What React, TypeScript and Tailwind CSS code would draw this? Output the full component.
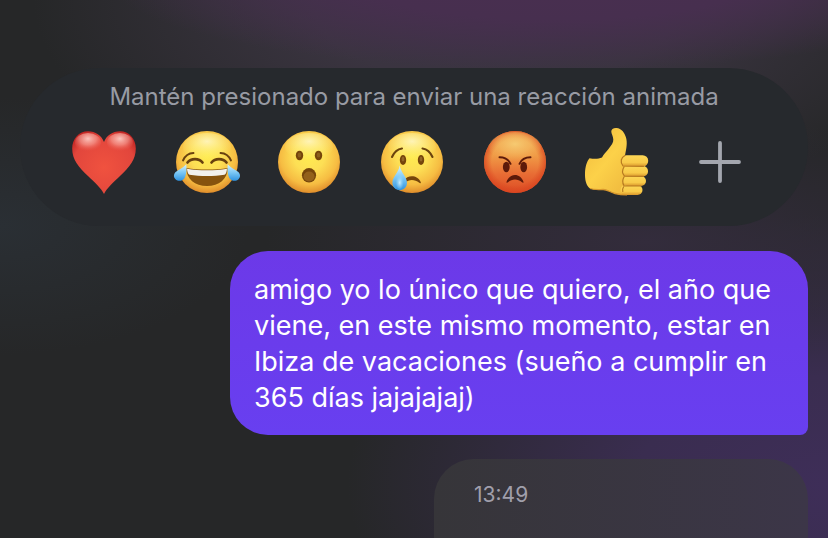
import React from "react";

interface Reaction {
  name: string;
  icon: React.ReactNode;
}

// Shared gradients, referenced by id from the reaction icons
function Gradients() {
  return (
    <svg className="absolute" width="0" height="0" aria-hidden="true">
      <defs>
        <radialGradient id="face" cx="0.5" cy="0.4" r="0.62">
          <stop offset="0" stopColor="#ffec50" />
          <stop offset="0.4" stopColor="#fddf55" />
          <stop offset="0.75" stopColor="#f6bc42" />
          <stop offset="1" stopColor="#dc8628" />
        </radialGradient>
        <radialGradient id="shine" cx="0.5" cy="0.3" r="0.65">
          <stop offset="0" stopColor="#fff8cf" stopOpacity="0.8" />
          <stop offset="1" stopColor="#fff27a" stopOpacity="0" />
        </radialGradient>
        <linearGradient id="angry" x1="0" y1="0" x2="0" y2="1">
          <stop offset="0" stopColor="#efa04a" />
          <stop offset="0.4" stopColor="#f09a46" />
          <stop offset="0.7" stopColor="#e86c34" />
          <stop offset="1" stopColor="#dc4c24" />
        </linearGradient>
        <radialGradient id="angry-rim" cx="0.5" cy="0.5" r="0.5">
          <stop offset="0.75" stopColor="#d9431f" stopOpacity="0" />
          <stop offset="1" stopColor="#d9431f" stopOpacity="0.75" />
        </radialGradient>
        <radialGradient id="angry-shine" cx="0.5" cy="0.4" r="0.6">
          <stop offset="0" stopColor="#f7cf76" stopOpacity="0.9" />
          <stop offset="0.5" stopColor="#f5c066" stopOpacity="0.6" />
          <stop offset="1" stopColor="#f2a950" stopOpacity="0" />
        </radialGradient>
        <radialGradient id="heart" cx="0.5" cy="0.58" r="0.66">
          <stop offset="0" stopColor="#f0523f" />
          <stop offset="0.75" stopColor="#e2463c" />
          <stop offset="1" stopColor="#bd2220" />
        </radialGradient>
        <radialGradient id="heart-shine" cx="0.5" cy="0.3" r="0.65">
          <stop offset="0" stopColor="#ffd2ca" stopOpacity="0.9" />
          <stop offset="0.5" stopColor="#f9a79d" stopOpacity="0.6" />
          <stop offset="1" stopColor="#f0645a" stopOpacity="0" />
        </radialGradient>
        <linearGradient id="tear" x1="0" y1="0" x2="0" y2="1">
          <stop offset="0" stopColor="#d5f3ff" />
          <stop offset="0.5" stopColor="#7cc8f5" />
          <stop offset="1" stopColor="#2f93e0" />
        </linearGradient>
        <radialGradient id="tear-glow" cx="0.5" cy="0.6" r="0.5">
          <stop offset="0" stopColor="#d2f2ff" stopOpacity="0.9" />
          <stop offset="1" stopColor="#8fd6fb" stopOpacity="0" />
        </radialGradient>
        <linearGradient id="hand" x1="0" y1="0" x2="1" y2="1">
          <stop offset="0" stopColor="#f0b93a" />
          <stop offset="0.45" stopColor="#fcd149" />
          <stop offset="1" stopColor="#eab03a" />
        </linearGradient>
        <linearGradient id="finger" x1="0" y1="0" x2="0" y2="1">
          <stop offset="0" stopColor="#fdd756" />
          <stop offset="0.65" stopColor="#f8ca49" />
          <stop offset="1" stopColor="#d9962b" />
        </linearGradient>
      </defs>
    </svg>
  );
}

function Icon({ children }: { children: React.ReactNode }) {
  return (
    <svg
      className="size-17 overflow-visible"
      viewBox="0 0 68 68"
      fill="none"
      aria-hidden="true"
    >
      {children}
    </svg>
  );
}

function Face() {
  return (
    <>
      <circle cx="34" cy="34" r="31" fill="url(#face)" />
      <ellipse cx="34" cy="19" rx="24" ry="14" fill="url(#shine)" />
    </>
  );
}

const reactions: Reaction[] = [
  {
    name: "Me encanta",
    icon: (
      <Icon>
        <path
          d="M34 66C31 60 25 54.500 18 48C8.500 39 2.200 31.500 2.200 20.500C2.200 10.500 9 3.200 18 3.200C25.500 3.200 31.500 7.500 34 14C36.500 7.500 42.500 3.200 50 3.200C59 3.200 65.800 10.500 65.800 20.500C65.800 31.500 59.500 39 50 48C43 54.500 37 60 34 66Z"
          fill="url(#heart)"
        />
        <ellipse cx="18" cy="14.500" rx="13" ry="9.500" fill="url(#heart-shine)" />
        <ellipse cx="50" cy="14.500" rx="13" ry="9.500" fill="url(#heart-shine)" />
      </Icon>
    ),
  },
  {
    name: "Me divierte",
    icon: (
      <Icon>
        <Face />
        <g stroke="#69410f" strokeLinecap="round">
          <path d="M10 32.500C12 28 15.500 25.200 20.500 25" strokeWidth="1.900" />
          <path d="M58 32.500C56 28 52.500 25.200 47.500 25" strokeWidth="1.900" />
          <path d="M14.500 34.500C18 30 26 30 29.500 34.500" strokeWidth="2.700" />
          <path d="M38.500 34.500C42 30 50 30 53.500 34.500" strokeWidth="2.700" />
        </g>
        <path
          d="M13.300 40C25 42 43 42 54.700 40C54.700 51 46 58 34 58C22 58 13.300 51 13.300 40Z"
          fill="#86530e"
        />
        <path
          d="M14 40.700C26 42.700 42 42.700 54 40.700C53.700 44 53 46 51.500 46.800C41 48.500 27 48.500 16.500 46.800C15 46 14.300 44 14 40.700Z"
          fill="#f2f0ec"
        />
        <path
          d="M13.300 36.200C13.800 42 13.300 47.500 11.300 50.500C9 53.500 5 53.500 2.500 51.300C0.300 49 0.500 45.800 3 43.800C5.500 41.800 10 40 13.300 36.200Z"
          fill="url(#tear)"
        />
        <path
          d="M54.700 36.200C54.200 42 54.700 47.500 56.700 50.500C59 53.500 63 53.500 65.500 51.300C67.700 49 67.500 45.800 65 43.800C62.500 41.800 58 40 54.700 36.200Z"
          fill="url(#tear)"
        />
      </Icon>
    ),
  },
  {
    name: "Me asombra",
    icon: (
      <Icon>
        <Face />
        <g fill="#75450b">
          <ellipse cx="24.500" cy="27.500" rx="3.700" ry="4.800" />
          <ellipse cx="43.500" cy="27.500" rx="3.700" ry="4.800" />
          <ellipse cx="34" cy="47.300" rx="7.100" ry="7.300" />
        </g>
        <g fill="#8a5e1c">
          <ellipse cx="24.500" cy="27" rx="1.800" ry="2.500" />
          <ellipse cx="43.500" cy="27" rx="1.800" ry="2.500" />
          <ellipse cx="34" cy="48.500" rx="5.500" ry="5" fill="#93601b" />
        </g>
      </Icon>
    ),
  },
  {
    name: "Me entristece",
    icon: (
      <Icon>
        <Face />
        <g stroke="#6b430e" strokeLinecap="round" strokeWidth="2.100">
          <path d="M14 29C16 24.500 19.500 21.200 24 20.500" />
          <path d="M54.500 29C52.500 24.500 49 21.200 44.500 20.500" />
        </g>
        <g fill="#75450b">
          <ellipse cx="25" cy="32" rx="3.200" ry="5" />
          <ellipse cx="43" cy="32" rx="3.200" ry="5" />
          <path d="M26 52.500C29.500 46.500 39.500 46.500 42.800 54.200C43 55.300 42 55.500 41.300 54.800C36.500 51 31.500 51 27 54.500Z" />
        </g>
        <g fill="#936729">
          <ellipse cx="25" cy="31" rx="1.400" ry="2.500" />
          <ellipse cx="43" cy="31" rx="1.400" ry="2.500" />
        </g>
        <path
          d="M21.700 37.500C22.700 44.500 29 48.500 29 54.800C29 59 25.700 62.200 21.700 62.200C17.700 62.200 14.400 59 14.400 54.800C14.400 48.500 20.700 44.500 21.700 37.500Z"
          fill="url(#tear)"
        />
        <ellipse cx="21.700" cy="53" rx="4.200" ry="8" fill="url(#tear-glow)" />
      </Icon>
    ),
  },
  {
    name: "Me enoja",
    icon: (
      <Icon>
        <circle cx="34" cy="34" r="31" fill="url(#angry)" />
        <circle cx="34" cy="34" r="31" fill="url(#angry-rim)" />
        <ellipse cx="34" cy="19" rx="26" ry="15" fill="url(#angry-shine)" />
        <g fill="#5c1a0a">
          <ellipse cx="25.300" cy="39" rx="3.400" ry="5.200" />
          <ellipse cx="42.700" cy="39" rx="3.400" ry="5.200" />
          <path d="M25.500 54C28.500 44.800 39.500 44.800 42.500 54C42.600 55 41.700 55 41 54.300C36.800 50.500 31.200 50.500 27 54.300C26.300 55 25.400 55 25.500 54Z" />
        </g>
        <g stroke="#5c1a0a" strokeLinecap="round" strokeWidth="2">
          <path d="M18.500 29.300C23.500 29.300 27.500 31.500 29.500 35.800" />
          <path d="M49.500 29.300C44.500 29.300 40.500 31.500 38.500 35.800" />
        </g>
      </Icon>
    ),
  },
  {
    name: "Me gusta",
    icon: (
      <Icon>
        <path
          d="M6.500 30.200C11 31 15.500 31 19 29.500C20.500 26 23 24.500 25.500 21C28.500 17 30.500 14.500 30.300 11.500C30.200 8.500 28.500 6 28.300 3.800C28.100 1 30.500 -0.200 33.500 0C38.500 0.500 41.500 4.500 43 9.500C44.500 15 43.500 20 42 27.500L57 40L54 66.500C46 67 39 67.300 32 65.500C27.500 64.300 24 61.500 20.300 61.500C15 61.500 11 62 7 60.500C3 58 1.800 51 2 45C2.200 38.500 4 33 6.500 30.200Z"
          fill="url(#hand)"
        />
        <g fill="url(#finger)">
          <rect x="37.500" y="57" width="22" height="10" rx="5" />
          <rect x="39" y="48" width="24" height="10" rx="5" />
          <rect x="39" y="38" width="26" height="10.500" rx="5" />
          <rect x="38" y="27.200" width="27.200" height="11.300" rx="5.500" />
        </g>
        <g stroke="#b77a20" strokeLinecap="round" strokeWidth="1.200">
          <path d="M42 27.500C38 29.500 36.800 34 40 38L60.500 38.300" />
          <path d="M41 39C39 42 39.200 45.500 41.500 48.200L60.500 48.300" />
          <path d="M41 49C39.500 51.500 39.300 55 41 57.800L58 58" />
          <path d="M40.500 59C39.500 60.500 39.300 62 39.800 63.500" />
        </g>
        <path
          d="M7 60.500C11 62 15 61.500 20.300 61.500C24 61.500 27.500 64.300 32 65.500C36 66.500 40 66.800 44 66.800"
          stroke="#d8982d"
          strokeWidth="1.300"
        />
      </Icon>
    ),
  },
  {
    name: "Más reacciones",
    icon: (
      <Icon>
        <path
          d="M34 15V53M15 34H53"
          stroke="#a3a6ae"
          strokeWidth="3.800"
          strokeLinecap="round"
        />
      </Icon>
    ),
  },
];

function ReactionPicker() {
  return (
    <section className="rounded-[79px] bg-[#26292d] pt-[13px] pb-[30px]">
      <p className="text-center text-2xl leading-8 text-[#989ba4]">
        Mantén presionado para enviar una reacción animada
      </p>
      <div className="mt-[15px] grid grid-cols-7 pl-[33px] pr-[37px]">
        {reactions.map((reaction) => (
          <button
            key={reaction.name}
            type="button"
            aria-label={reaction.name}
            className="flex justify-center"
          >
            {reaction.icon}
          </button>
        ))}
      </div>
    </section>
  );
}

function App() {
  return (
    <main className="flex min-h-screen flex-col bg-[#262728] bg-[radial-gradient(ellipse_54%_17%_at_67%_-4%,#492f50_0%,#472f4f_45%,#472f4f00_100%),radial-gradient(ellipse_56%_40%_at_60%_0%,#3d3446_0%,#3a3440_40%,#3a344000_100%),radial-gradient(ellipse_30%_24%_at_0%_42%,#2a2f34_0%,#2a2f3400_100%),radial-gradient(ellipse_46%_24%_at_78%_45%,#332c3c_0%,#332c3c00_100%),radial-gradient(ellipse_58%_50%_at_100%_90%,#3e2e58_0%,#3a2d50_40%,#3a2d5000_100%)] px-5 pt-[68px] font-['Inter',sans-serif]">
      <Gradients />
      <ReactionPicker />
      <p className="mt-[25px] w-full max-w-[578px] self-end rounded-[38px] rounded-br-lg bg-linear-to-b from-[#6c39e8] to-[#683ff0] px-6 pt-[21px] pb-[19px] text-[27px] leading-9 text-white">
        amigo yo lo único que quiero, el año que viene, en este mismo momento,
        estar en Ibiza de vacaciones (sueño a cumplir en 365 días jajajajaj)
      </p>
      <div className="mt-6 w-full max-w-[374px] grow self-end rounded-t-[40px] bg-linear-to-r from-[#363539] to-[#3c3648] px-10 pt-6">
        <time className="block text-[21px] leading-6 text-[#a09fab]">
          13:49
        </time>
      </div>
    </main>
  );
}

export default App;
